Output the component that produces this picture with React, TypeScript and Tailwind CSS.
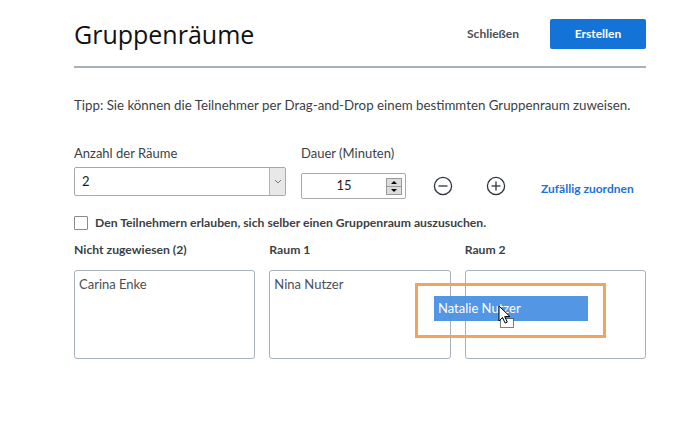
// Breakout-room dialog with a participant being dragged into "Raum 2".
function CircleIcon({ plus }: { plus?: boolean }) {
  return (
    <svg viewBox="0 0 20 20" className="h-[20px] w-[20px]" fill="none" aria-hidden="true">
      <circle cx="10" cy="10" r="8.6" stroke="#2f3540" strokeWidth="1.3" />
      <path d="M5.5 10h9" stroke="#2f3540" strokeWidth="1.3" />
      {plus && <path d="M10 5.5v9" stroke="#2f3540" strokeWidth="1.3" />}
    </svg>
  );
}

function DragCursor() {
  return (
    <svg viewBox="0 0 18 24" className="h-[24px] w-[18px]" aria-hidden="true">
      <rect x="2.5" y="13.5" width="13" height="9" fill="white" stroke="black" strokeDasharray="1 1" />
      <path d="M1 1v15l3.5-3.5 2.6 5.6 2.2-1-2.6-5.5H12z" fill="white" stroke="black" strokeWidth="1" />
    </svg>
  );
}

export default function App() {
  const sans = "font-['Lato','Open_Sans',sans-serif]";
  return (
    <div className={`relative h-[423px] w-[694px] overflow-hidden bg-white text-[#3b3f45] ${sans}`}>
      <div className="ml-[74px] w-[572px]">
        <div className="mt-[19px] flex h-[30px] items-center justify-between">
          <h1 className="font-['Open_Sans',sans-serif] text-[25px] leading-none text-[#111]">Gruppenräume</h1>
          <div className="flex items-center">
            <button className="mr-[31px] text-[12px] font-bold text-[#4a4f57]">Schließen</button>
            <button className="h-[30px] w-[96px] rounded-[2px] bg-[#1473d6] text-[12px] font-bold text-white">
              Erstellen
            </button>
          </div>
        </div>
        <div className="mt-[17px] h-[2px] bg-[#a7b1bb]" />

        <p className="mt-[29px] text-[13.3px] leading-[16px] text-[#3b3f45]">
          Tipp: Sie können die Teilnehmer per Drag-and-Drop einem bestimmten Gruppenraum zuweisen.
        </p>

        <div className="mt-[32px] flex items-start">
          <div className="w-[227px]">
            <div className="text-[13px] leading-[16px]">Anzahl der Räume</div>
            <div className="mt-[6px] flex h-[29px] w-[212px] items-stretch rounded-[2px] border border-[#a9a9a9]">
              <span className="flex-1 pl-[7px] text-[13px] leading-[27px] text-[#222]">2</span>
              <span className="flex w-[16px] items-center justify-center border-l border-[#b5b5b5] bg-[#e8e8e8]">
                <svg viewBox="0 0 8 5" className="h-[5px] w-[8px]" fill="none">
                  <path d="M1 1l3 3 3-3" stroke="#777" strokeWidth="1" />
                </svg>
              </span>
            </div>
          </div>
          <div className="w-[105px]">
            <div className="text-[13px] leading-[16px]">Dauer (Minuten)</div>
            <div className="mt-[12px] flex h-[26px] w-[105px] items-center rounded-[2px] border border-[#a9a9a9]">
              <span className="w-[84px] text-center text-[13px] text-[#222]">15</span>
              <span className="flex h-[17px] w-[16px] flex-col border border-[#9a9a9a] bg-[#dcdcdc]">
                <span className="flex flex-1 items-center justify-center border-b border-[#9a9a9a]">
                  <span className="h-0 w-0 border-x-[3px] border-b-[3px] border-x-transparent border-b-black" />
                </span>
                <span className="flex flex-1 items-center justify-center">
                  <span className="h-0 w-0 border-x-[3px] border-t-[3px] border-x-transparent border-t-black" />
                </span>
              </span>
            </div>
          </div>
          <div className="mt-[28px] ml-[27px] flex items-center">
            <CircleIcon />
            <span className="ml-[33px]"><CircleIcon plus /></span>
            <span className="ml-[35px] mt-[7px] text-[12px] font-bold text-[#1a73d9]">Zufällig zuordnen</span>
          </div>
        </div>

        <label className="mt-[16px] flex items-center">
          <span className="h-[14px] w-[14px] rounded-[1px] border border-[#8a8a8a] bg-white" />
          <span className="ml-[7px] text-[12.2px] font-bold leading-[16px] text-[#3b3f45]">
            Den Teilnehmern erlauben, sich selber einen Gruppenraum auszusuchen.
          </span>
        </label>

        <div className="mt-[11px] grid grid-cols-3 gap-x-[14px]">
          {[
            ["Nicht zugewiesen (2)", "Carina Enke"],
            ["Raum 1", "Nina Nutzer"],
            ["Raum 2", ""],
          ].map(([title, name]) => (
            <div key={title}>
              <div className="text-[12.2px] font-bold leading-[16px] text-[#3b3f45]">{title}</div>
              <div className="mt-[12px] h-[89px] rounded-[3px] border border-[#a7b1bb] px-[4px] pt-[4px] text-[13px] leading-[18px] text-[#4a4f57]">
                {name}
              </div>
            </div>
          ))}
        </div>
      </div>

      <div className="absolute left-[415px] top-[283px] h-[55px] w-[191px] border-[3px] border-[#f2a35e]" />
      <div className="absolute left-[434px] top-[296px] flex h-[25px] w-[154px] items-center bg-[#4a90e2]/95 pl-[4px] text-[13px] text-white">
        Natalie Nutzer
      </div>
      <div className="absolute left-[498px] top-[305px]">
        <DragCursor />
      </div>
    </div>
  );
}
